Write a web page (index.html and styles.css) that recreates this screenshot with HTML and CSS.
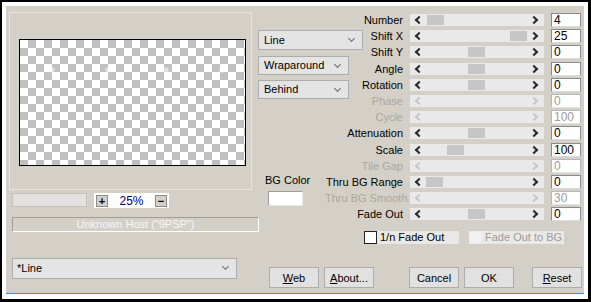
FILE: index.html
```html
<!DOCTYPE html>
<html lang="en">
<head>
  <meta charset="UTF-8">
  <title>Line</title>
  <link rel="stylesheet" href="styles.css">
</head>
<body>
  <div class="window">
    <div class="dialog">

      <div class="left">
        <div class="preview-group">
          <div class="preview">
            <span class="glow" style="left: 28px"></span>
            <span class="glow" style="left: 84px"></span>
            <span class="glow" style="left: 142px"></span>
            <span class="glow" style="left: 198px"></span>
          </div>
        </div>

        <div class="zoom-row">
          <div class="zoom-field"></div>
          <div class="zoom-box">
            <span class="zoom-btn">+</span>
            <span class="zoom-val">25%</span>
            <span class="zoom-btn">&minus;</span>
          </div>
        </div>

        <div class="host">Unknown Host ("9PSP")</div>

        <div class="select preset">*Line</div>
      </div>

      <div class="right">
        <div class="top">
          <div class="mid">
            <div class="select sel-line">Line</div>
            <div class="select sel-small">Wraparound</div>
            <div class="select sel-small sel-behind">Behind</div>
            <div class="bg-color">
              <div>BG Color</div>
              <div class="swatch"></div>
            </div>
          </div>

          <div class="params">
            <label>Number</label>
            <div class="slider"><span class="thumb" style="left: 17px"></span></div>
            <div class="value">4</div>

            <label>Shift X</label>
            <div class="slider"><span class="thumb" style="left: 100px"></span></div>
            <div class="value">25</div>

            <label>Shift Y</label>
            <div class="slider"><span class="thumb" style="left: 58px"></span></div>
            <div class="value">0</div>

            <label>Angle</label>
            <div class="slider"><span class="thumb" style="left: 58px"></span></div>
            <div class="value">0</div>

            <label>Rotation</label>
            <div class="slider"><span class="thumb" style="left: 58px"></span></div>
            <div class="value">0</div>

            <label class="off">Phase</label>
            <div class="slider off"></div>
            <div class="value off">0</div>

            <label class="off">Cycle</label>
            <div class="slider off"></div>
            <div class="value off">100</div>

            <label>Attenuation</label>
            <div class="slider"><span class="thumb" style="left: 58px"></span></div>
            <div class="value">0</div>

            <label>Scale</label>
            <div class="slider"><span class="thumb" style="left: 37px"></span></div>
            <div class="value">100</div>

            <label class="off">Tile Gap</label>
            <div class="slider off"></div>
            <div class="value off">0</div>

            <label>Thru BG Range</label>
            <div class="slider"><span class="thumb" style="left: 16px"></span></div>
            <div class="value">0</div>

            <label class="off">Thru BG Smooth</label>
            <div class="slider off"></div>
            <div class="value off">30</div>

            <label>Fade Out</label>
            <div class="slider"><span class="thumb" style="left: 58px"></span></div>
            <div class="value">0</div>
          </div>
        </div>

        <div class="checks">
          <span class="box"></span>
          <span class="check-label">1/n Fade Out</span>
          <span class="box off"></span>
          <span class="check-label off">Fade Out to BG</span>
        </div>

        <div class="buttons">
          <button><u>W</u>eb</button>
          <button class="btn-about"><u>A</u>bout...</button>
          <button class="btn-cancel">Cancel</button>
          <button class="btn-ok">OK</button>
          <button class="btn-reset"><u>R</u>eset</button>
        </div>
      </div>

    </div>
  </div>
</body>
</html>
```

FILE: styles.css
```css
body {
  margin: 0;
  font-family: "Liberation Sans", Arial, sans-serif;
  font-size: 11px;
  color: #000;
  background: #fff;
}

.window {
  width: 591px;
  height: 302px;
  box-sizing: border-box;
  border: solid #000;
  border-width: 2px 3px 3px 2px;
  padding: 4px 4px 5px 4px;
  background: #fff;
}
.dialog {
  height: 288px;
  box-sizing: border-box;
  background: #d4d0c8;
  border-bottom: 1px solid #3c8ad8;
  display: grid;
  grid-template-columns: 252px 1fr;
}

/* left side */
.preview-group {
  margin: 6px 0 0 3px;
  width: 243px;
  height: 178px;
  box-sizing: border-box;
  border: 1px solid #e8e5de;
  padding: 26px 0 0 9px;
}
.preview {
  position: relative;
  width: 227px;
  height: 127px;
  box-sizing: border-box;
  border: 1px solid #000;
  background-color: #fff;
  background-image: conic-gradient(#c0c0c0 25%, #fff 0 50%, #c0c0c0 0 75%, #fff 0);
  background-size: 16px 16px;
}
.glow {
  position: absolute;
  top: 26px;
  width: 8px;
  height: 8px;
  border-radius: 50%;
  background: radial-gradient(rgba(255, 255, 255, 0.8), rgba(255, 255, 255, 0) 70%);
}

.zoom-row {
  display: flex;
  gap: 7px;
  margin: 3px 0 0 6px;
}
.zoom-field {
  width: 75px;
  height: 14px;
  box-sizing: border-box;
  background: #e3e1dd;
  border: 1px solid #c4c1ba;
}
.zoom-box {
  width: 75px;
  height: 15px;
  box-sizing: border-box;
  background: #fff;
  display: flex;
  align-items: center;
  justify-content: space-between;
  padding: 0 2px;
}
.zoom-btn {
  width: 12px;
  height: 12px;
  box-sizing: border-box;
  border: 1px solid #8c8c8c;
  background: #d4d0c8;
  font-weight: bold;
  line-height: 10px;
  text-align: center;
}
.zoom-val {
  color: #000080;
  font-size: 12px;
}

.host {
  margin: 9px 0 0 6px;
  width: 247px;
  height: 15px;
  box-sizing: border-box;
  border: 1px solid #a19e97;
  border-right-color: #fff;
  border-bottom-color: #fff;
  color: #f6f6f6;
  text-align: center;
  line-height: 13px;
}

.select {
  position: relative;
  box-sizing: border-box;
  height: 20px;
  line-height: 18px;
  padding-left: 5px;
  border: 1px solid #acacac;
  background: #e4e4e4;
}
.select::after {
  content: "";
  position: absolute;
  right: 8px;
  top: 5px;
  width: 4px;
  height: 4px;
  border-right: 1px solid #6a6a6a;
  border-bottom: 1px solid #6a6a6a;
  transform: rotate(45deg);
}
.preset {
  margin: 26px 0 0 6px;
  width: 225px;
  height: 21px;
  line-height: 19px;
  padding-left: 4px;
}

/* right side */
.top {
  display: flex;
}
.mid {
  width: 67px;
  flex: none;
}
.sel-line {
  margin-top: 24px;
  width: 105px;
}
.sel-small {
  margin-top: 6px;
  width: 91px;
  height: 19px;
  line-height: 17px;
}
.sel-behind {
  margin-top: 5px;
}
.bg-color {
  margin: 75px 0 0 7px;
  width: 42px;
  text-align: center;
  line-height: 13px;
  white-space: nowrap;
}
.swatch {
  margin: 4px 0 0 3px;
  width: 35px;
  height: 15px;
  box-sizing: border-box;
  background: #fff;
  border: 1px solid #9c9c9c;
  border-right-color: #e6e6e6;
  border-bottom-color: #e6e6e6;
}

.params {
  margin-top: 6px;
  display: grid;
  grid-template-columns: 78px 134px 30px;
  grid-auto-rows: 16.2px;
  column-gap: 7px;
  align-items: center;
}
.params label {
  text-align: right;
  white-space: nowrap;
}
.params .off {
  color: #aaa79f;
}
.slider {
  position: relative;
  height: 12px;
  background: #e9e9e9;
}
.slider::before,
.slider::after {
  content: "";
  position: absolute;
  top: 3px;
  width: 4px;
  height: 4px;
  border: 0 solid #2b2b2b;
  transform: rotate(45deg);
}
.slider::before {
  left: 6px;
  border-left-width: 2px;
  border-bottom-width: 2px;
}
.slider::after {
  right: 7px;
  border-right-width: 2px;
  border-top-width: 2px;
}
.slider.off::before,
.slider.off::after {
  border-color: #c8c8c8;
}
.thumb {
  position: absolute;
  top: 1px;
  width: 17px;
  height: 10px;
  background: #c6c6c6;
}
.value {
  height: 14px;
  box-sizing: border-box;
  background: #fff;
  border: 1px solid #8a8a8a;
  border-bottom-color: #dcdcdc;
  padding-left: 2px;
  line-height: 12px;
  font-size: 12px;
}
.params .value.off {
  color: #9c9c9c;
  border-color: #b8b8b8;
  border-bottom-color: #e4e4e4;
}

.checks {
  display: flex;
  margin: 9px 0 0 106px;
  height: 13px;
}
.box {
  width: 13px;
  height: 13px;
  box-sizing: border-box;
  border: 1px solid #222;
  background: #fff;
}
.box.off {
  margin-left: 10px;
  border-color: #ececec;
  background: #f1f1f1;
}
.check-label {
  width: 82px;
  padding-left: 3px;
  box-sizing: border-box;
  background: #e9e8e5;
  line-height: 13px;
  white-space: nowrap;
}
.check-label.off {
  color: #9c9c9c;
}

.buttons {
  display: flex;
  margin: 23px 0 0 11px;
}
button {
  width: 50px;
  height: 21px;
  padding: 0;
  box-sizing: border-box;
  border: 1px solid #adadad;
  background: #e1e1e1;
  font-family: inherit;
  font-size: 11px;
  color: #000;
}
.btn-about {
  margin-left: 5px;
}
.btn-cancel {
  margin-left: 35px;
}
.btn-ok {
  margin-left: 5px;
}
.btn-reset {
  margin-left: 18px;
}
```
